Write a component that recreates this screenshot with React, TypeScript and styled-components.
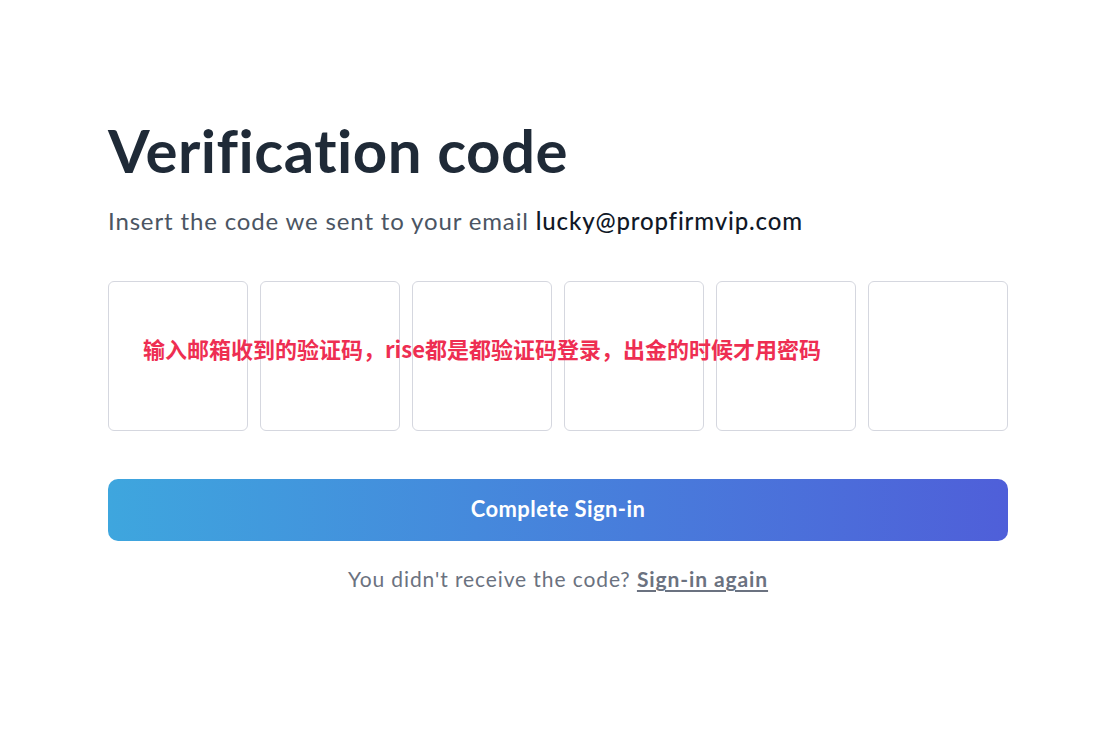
import React from "react";
import styled, { createGlobalStyle } from "styled-components";

const Global = createGlobalStyle`
  html, body { margin: 0; padding: 0; background: #ffffff; }
  body { font-family: "Lato", "Noto Sans", sans-serif; }
`;

const Page = styled.div`
  width: 1105px;
  height: 730px;
  box-sizing: border-box;
  padding: 112px 0 0 108px;
`;

const Content = styled.div`
  position: relative;
  width: 900px;
  display: flex;
  flex-direction: column;
`;

const Title = styled.h1`
  margin: 0;
  font-family: "Lato", sans-serif;
  font-weight: 700;
  font-size: 60px;
  line-height: 76px;
  color: #1f2a37;
  letter-spacing: 0.5px;
`;

const Subtitle = styled.p`
  margin: 17px 0 0;
  font-size: 24px;
  line-height: 32px;
  font-weight: 400;
  color: #4b5563;
  letter-spacing: 0.85px;
  white-space: nowrap;
`;

const Email = styled.span`
  color: #111827;
  font-weight: 500;
`;

const CodeRow = styled.div`
  margin-top: 44px;
  display: grid;
  grid-template-columns: repeat(6, 140px);
  gap: 12px;
`;

const CodeBox = styled.div`
  height: 150px;
  box-sizing: border-box;
  border: 1px solid #d5d7df;
  border-radius: 6px;
  background: #fff;
`;

const Note = styled.div`
  position: absolute;
  left: 35px;
  top: 223px;
  font-family: "Noto Sans CJK SC", sans-serif;
  font-weight: 700;
  font-size: 22px;
  line-height: 26px;
  color: #ee2e52;
  white-space: nowrap;
`;

const Button = styled.button`
  margin-top: 48px;
  height: 62px;
  width: 100%;
  border: none;
  border-radius: 10px;
  background: linear-gradient(90deg, #3ea6de 0%, #4f5fd9 100%);
  color: #ffffff;
  font-family: "Lato", sans-serif;
  font-weight: 700;
  font-size: 22px;
  letter-spacing: 0.4px;
  padding: 0 0 3px;
`;

const Footer = styled.p`
  margin: 24px 0 0;
  text-align: center;
  font-size: 21px;
  line-height: 28px;
  color: #6b7280;
  letter-spacing: 0.9px;
`;

const Link = styled.a`
  color: #6b7280;
  font-weight: 700;
  text-decoration: underline;
  text-underline-offset: 3px;
`;

export default function App() {
  return (
    <>
      <Global />
      <Page>
        <Content>
          <Title>Verification code</Title>
          <Subtitle>
            Insert the code we sent to your email <Email>lucky@propfirmvip.com</Email>
          </Subtitle>
          <CodeRow>
            {Array.from({ length: 6 }).map((_, i) => (
              <CodeBox key={i} />
            ))}
          </CodeRow>
          <Note>输入邮箱收到的验证码，rise都是都验证码登录，出金的时候才用密码</Note>
          <Button>Complete Sign-in</Button>
          <Footer>
            You didn't receive the code? <Link>Sign-in again</Link>
          </Footer>
        </Content>
      </Page>
    </>
  );
}
